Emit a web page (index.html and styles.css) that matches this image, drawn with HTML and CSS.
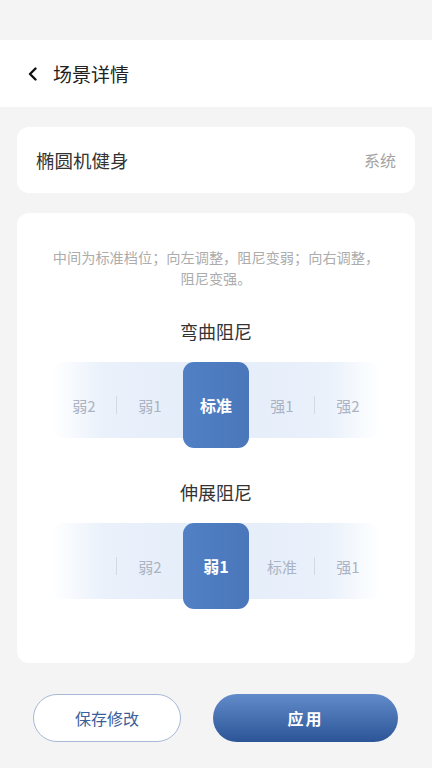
FILE: index.html
```html
<!DOCTYPE html>
<html lang="zh-CN">
<head>
<meta charset="utf-8">
<title>场景详情</title>
<link rel="stylesheet" href="styles.css">
</head>
<body>
<div class="status"></div>
<header class="header">
  <svg class="back" width="12" height="14" viewBox="0 0 12 14"><path d="M8.5 1.5 L3 7 L8.5 12.5" fill="none" stroke="#111" stroke-width="2.4" stroke-linecap="round" stroke-linejoin="round"/></svg>
  <span class="title">场景详情</span>
</header>
<main class="content">
  <section class="card name-card">
    <span class="name">椭圆机健身</span>
    <span class="tag">系统</span>
  </section>
  <section class="card detail-card">
    <p class="desc">中间为标准档位；向左调整，阻尼变弱；向右调整，<br>阻尼变强。</p>
    <h2 class="label">弯曲阻尼</h2>
    <div class="track">
      <div class="item sep">弱2</div>
      <div class="item">弱1</div>
      <div class="item active">标准</div>
      <div class="item sep">强1</div>
      <div class="item">强2</div>
    </div>
    <h2 class="label second">伸展阻尼</h2>
    <div class="track">
      <div class="item sep"></div>
      <div class="item">弱2</div>
      <div class="item active">弱1</div>
      <div class="item sep">标准</div>
      <div class="item">强1</div>
    </div>
  </section>
  <div class="actions">
    <button class="btn save">保存修改</button>
    <button class="btn apply">应用</button>
  </div>
</main>
</body>
</html>
```
FILE: styles.css
```css
* { box-sizing: border-box; }
html, body { margin: 0; padding: 0; }
body {
  background: #f4f4f4;
  font-family: "Noto Sans CJK SC", "Noto Sans", sans-serif;
  width: 432px;
  height: 768px;
  overflow: hidden;
}
.status { height: 40px; }
.header {
  height: 67px;
  background: #fff;
  display: flex;
  align-items: center;
  padding-left: 27px;
}
.back { display: block; margin-right: 14px; margin-top: 1px; }
.title { font-size: 19px; color: #222; line-height: 26px; }
.content { padding: 20px 17px 0; }
.card { background: #fff; border-radius: 12px; }
.name-card {
  height: 66px;
  display: flex;
  align-items: center;
  justify-content: space-between;
  padding: 0 19px 0 19px;
}
.name { font-size: 18.5px; color: #333; }
.tag { font-size: 16px; color: #a3a3a3; }
.detail-card {
  margin-top: 20px;
  height: 450px;
  padding-top: 34px;
  display: flex;
  flex-direction: column;
  align-items: center;
}
.desc {
  margin: 0;
  font-size: 14.2px;
  line-height: 21px;
  color: #acacac;
  text-align: center;
}
.label {
  margin: 29px 0 0;
  font-size: 18px;
  font-weight: 400;
  line-height: 26px;
  color: #333;
}
.label.second { margin-top: 36px; }
.track {
  margin-top: 18px;
  margin-bottom: 5px;
  display: grid;
  grid-template-columns: repeat(5, 66px);
  height: 76px;
  align-items: center;
  border-radius: 14px;
  background: linear-gradient(to right,
    rgba(236,242,252,0) 0%,
    #eaf1fb 16%,
    #e6eefa 38%,
    #e6eefa 62%,
    #eaf1fb 84%,
    rgba(236,242,252,0) 100%);
}
.item {
  height: 76px;
  display: flex;
  align-items: center;
  justify-content: center;
  font-size: 15px;
  color: #aab3c3;
}
.item.sep {
  background: linear-gradient(#d3d9e4, #d3d9e4) right center / 1px 18px no-repeat;
}
.item.active {
  height: 86px;
  border-radius: 11px;
  background: linear-gradient(to right, #5280c5, #4a77ba);
  color: #fff;
  font-size: 16px;
  font-weight: 700;
}
.actions {
  margin-top: 31px;
  display: flex;
  justify-content: space-between;
  padding: 0 17px 0 16px;
}
.btn {
  font-family: inherit;
  height: 48px;
  border-radius: 24px;
  font-size: 16px;
  cursor: pointer;
}
.save {
  width: 148px;
  background: #fff;
  border: 1px solid #a9b8d6;
  color: #3c5e99;
}
.apply {
  width: 185px;
  border: none;
  color: #fff;
  font-weight: 700;
  letter-spacing: 2px;
  background: linear-gradient(to bottom, #628bca, #2c5598);
}
```
